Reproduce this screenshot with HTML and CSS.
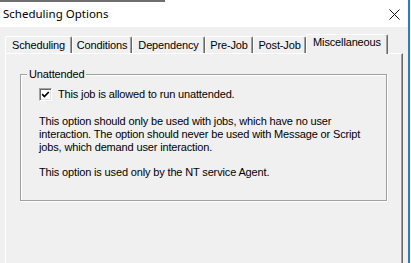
FILE: index.html
```html
<!DOCTYPE html>
<html lang="en">
<head>
  <meta charset="UTF-8" />
  <title>Scheduling Options</title>
  <link rel="stylesheet" href="styles.css">
</head>
<body>
  <div class="remnant"></div>
  <div class="window">
    <div class="titlebar">
      <span class="title">Scheduling Options</span>
      <svg class="close" viewBox="0 0 11 11"><path d="M0.5 0.5L10.5 10.5M10.5 0.5L0.5 10.5"/></svg>
    </div>
    <div class="client">
      <div class="tabs">
        <div class="tab tab-sched">Scheduling</div>
        <div class="tab tab-cond">Conditions</div>
        <div class="tab tab-dep">Dependency</div>
        <div class="tab tab-pre">Pre-Job</div>
        <div class="tab tab-post">Post-Job</div>
        <div class="tab tab-misc active">Miscellaneous</div>
      </div>
      <div class="panel">
        <fieldset class="group">
          <legend>Unattended</legend>
          <div class="group-body">
            <div class="check-row">
              <span class="checkbox">
                <svg viewBox="0 0 9 9"><path d="M1.2 4.2L3.4 6.5L7.8 2"/></svg>
              </span>
              <span>This job is allowed to run unattended.</span>
            </div>
            <p class="note">This option should only be used with jobs, which have no user<br>interaction. The option should never be used with Message or Script<br>jobs, which demand user interaction.</p>
            <p class="note note-last">This option is used only by the NT service Agent.</p>
          </div>
        </fieldset>
      </div>
    </div>
  </div>
</body>
</html>
```

FILE: styles.css
```css
* { margin: 0; padding: 0; box-sizing: border-box; }
body {
  width: 411px;
  height: 263px;
  overflow: hidden;
  background: #fff;
  font-family: 'Liberation Sans', Arial, sans-serif;
  font-size: 11px;
  letter-spacing: -0.15px;
  color: #000;
  position: relative;
}
.remnant {
  position: absolute;
  top: 0;
  left: 0;
  width: 165px;
  height: 2px;
  background: #4a4a4a;
  opacity: 0.8;
}
.window {
  width: 410px;
  height: 263px;
  background: #f0f0f0;
  border-right: 2px solid #1883d7;
  display: flex;
  flex-direction: column;
}
.titlebar {
  height: 27px;
  flex: none;
  background: #fff;
  display: flex;
  align-items: center;
  justify-content: space-between;
  padding: 0 8px 0 3px;
}
.title {
  font-family: 'Noto Sans', 'Liberation Sans', sans-serif;
  font-size: 11.5px;
  letter-spacing: 0;
  color: #000;
}
.close {
  width: 11px;
  height: 11px;
  margin-top: 1px;
}
.close path {
  stroke: #111;
  stroke-width: 1;
  fill: none;
}
.client {
  flex: 1;
  display: flex;
  flex-direction: column;
  padding: 7px 5px 0 5px;
}
.tabs {
  display: flex;
  align-items: flex-end;
  height: 19px;
  position: relative;
  z-index: 1;
}
.tab {
  height: 17px;
  border: 1px solid #fff;
  border-right-color: #696969;
  border-bottom: none;
  border-radius: 2px 2px 0 0;
  box-shadow: inset -1px 0 #a0a0a0;
  padding-top: 2px;
  line-height: 13px;
  text-align: center;
  white-space: nowrap;
}
.tab-sched { width: 67px; }
.tab-cond { width: 60px; }
.tab-dep { width: 73px; }
.tab-pre { width: 48px; }
.tab-post { width: 53px; }
.tab-misc { width: 82px; }
.tab.active {
  height: 20px;
  margin-bottom: -1px;
  padding-top: 1px;
  background: #f0f0f0;
}
.panel {
  flex: 1;
  border-top: 1px solid #fff;
  border-left: 1px solid #fff;
  border-right: 1px solid #696969;
  box-shadow: inset -1px 0 #a0a0a0;
}
.group {
  width: 367px;
  margin: 14px 0 0 14px;
  border: 1px solid #a0a0a0;
  box-shadow: inset 1px 1px #fff, 1px 1px #fff;
  padding: 0;
}
.group legend {
  margin-left: 6px;
  padding: 0 2px;
  line-height: 13px;
  background: #f0f0f0;
}
.group-body {
  padding: 7px 0 21px 18px;
}
.check-row {
  display: flex;
  align-items: center;
  gap: 6px;
  height: 13px;
  line-height: 13px;
}
.checkbox {
  width: 13px;
  height: 13px;
  background: #fff;
  border: 1px solid;
  border-color: #a0a0a0 #fff #fff #a0a0a0;
  box-shadow: inset 1px 1px #696969, inset -1px -1px #e3e3e3;
  display: flex;
  align-items: center;
  justify-content: center;
}
.checkbox svg {
  width: 9px;
  height: 9px;
}
.checkbox path {
  stroke: #000;
  stroke-width: 1.7;
  fill: none;
}
.note {
  line-height: 13px;
  margin-top: 14px;
}
.note-last {
  margin-top: 12px;
}
```
